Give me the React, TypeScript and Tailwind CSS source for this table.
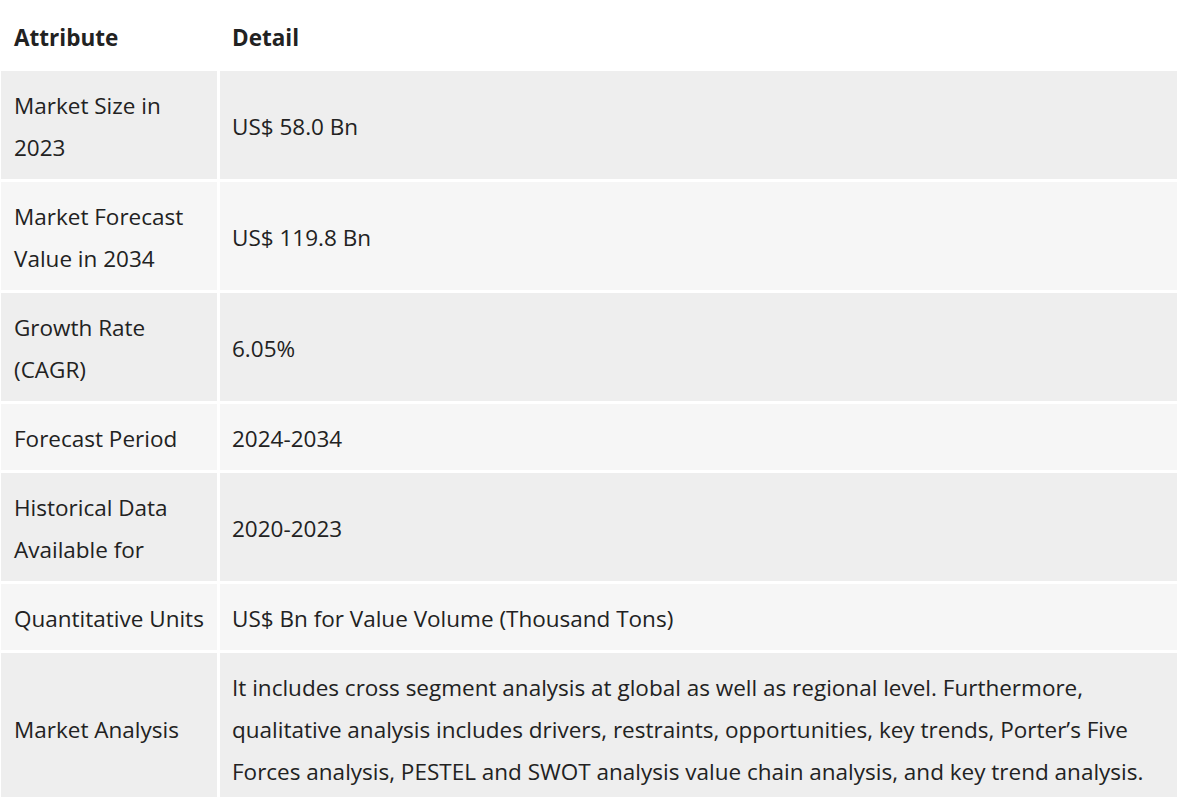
import React from "react"

const rows: { attr: string; detail: string }[] = [
  { attr: "Market Size in 2023", detail: "US$ 58.0 Bn" },
  { attr: "Market Forecast Value in 2034", detail: "US$ 119.8 Bn" },
  { attr: "Growth Rate (CAGR)", detail: "6.05%" },
  { attr: "Forecast Period", detail: "2024-2034" },
  { attr: "Historical Data Available for", detail: "2020-2023" },
  { attr: "Quantitative Units", detail: "US$ Bn for Value Volume (Thousand Tons)" },
  {
    attr: "Market Analysis",
    detail:
      "It includes cross segment analysis at global as well as regional level. Furthermore, qualitative analysis includes drivers, restraints, opportunities, key trends, Porter’s Five Forces analysis, PESTEL and SWOT analysis value chain analysis, and key trend analysis.",
  },
]

export default function App() {
  return (
    <div
      className="min-h-screen bg-white text-[#222222] text-[22.5px] leading-[42px]"
      style={{ fontFamily: '"Open Sans", "Noto Sans", sans-serif' }}
    >
      <div className="grid grid-cols-[216px_1fr] gap-[3px] pl-px">
        {/* header */}
        <div className="pl-[13px] pr-[6px] pt-[17px] pb-[9px] font-bold">Attribute</div>
        <div className="px-[12px] pt-[17px] pb-[9px] font-bold">Detail</div>

        {rows.map((r, i) => {
          const bg = i % 2 === 0 ? "bg-[#eeeeee]" : "bg-[#f6f6f6]"
          return (
            <React.Fragment key={r.attr}>
              <div className={`${bg} flex items-center pl-[13px] pr-[6px] pt-[14px] pb-[10px]`}>{r.attr}</div>
              <div className={`${bg} flex items-center px-[12px] pt-[14px] pb-[10px]`}>{r.detail}</div>
            </React.Fragment>
          )
        })}
      </div>
    </div>
  )
}
